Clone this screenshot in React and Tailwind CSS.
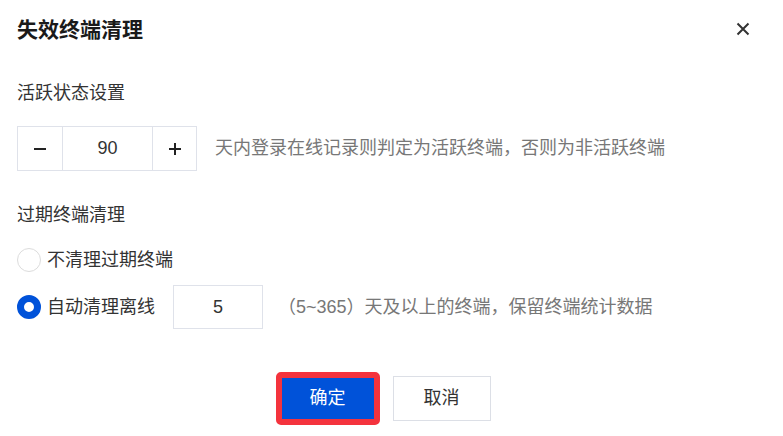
import { useState } from 'react';

const font = { fontFamily: '"Liberation Sans", "Noto Sans CJK SC", sans-serif' };

export default function App() {
  const [days, setDays] = useState(90);
  const [mode, setMode] = useState('auto');

  return (
    <div className="w-[783px] h-[436px] bg-white text-[#333] overflow-hidden" style={font}>
      <div className="h-[58px] flex items-center justify-between pl-[17px] pr-[33px]">
        <h1 className="text-[21px] font-bold text-[#1a1a1a] leading-none">失效终端清理</h1>
        <button className="w-[14px] h-[14px] flex items-center justify-center text-[#333]">
          <svg width="14" height="14" viewBox="0 0 14 14" fill="none" stroke="currentColor" strokeWidth="2">
            <path d="M1.5 1.5 L12.5 12.5 M12.5 1.5 L1.5 12.5" />
          </svg>
        </button>
      </div>

      <div className="px-[17px]">
        <p className="mt-[22px] h-[26px] leading-[26px] text-[18px] text-[#333]">活跃状态设置</p>

        <div className="mt-[20px] flex items-center">
          <div className="flex h-[45px] border border-[#dfe2ea]">
            <button
              onClick={() => setDays(d => Math.max(0, d - 1))}
              className="w-[45px] flex items-center justify-center border-r border-[#dfe2ea]"
            >
              <svg width="14" height="14" viewBox="0 0 14 14" stroke="#222" strokeWidth="2"><path d="M1 7 H13" /></svg>
            </button>
            <div className="w-[89px] flex items-center justify-center text-[18px] text-[#333]">{days}</div>
            <button
              onClick={() => setDays(d => d + 1)}
              className="w-[44px] flex items-center justify-center border-l border-[#dfe2ea]"
            >
              <svg width="14" height="14" viewBox="0 0 14 14" stroke="#222" strokeWidth="2"><path d="M1 7 H13 M7 1 V13" /></svg>
            </button>
          </div>
          <span className="ml-[18px] text-[18px] text-[#777]">天内登录在线记录则判定为活跃终端，否则为非活跃终端</span>
        </div>

        <p className="mt-[31px] h-[26px] leading-[26px] text-[18px] text-[#333]">过期终端清理</p>

        <label className="mt-[19px] h-[26px] flex items-center cursor-pointer" onClick={() => setMode('none')}>
          <span className={mode === 'none'
            ? 'w-[24px] h-[24px] rounded-full border-[7px] border-[#0052d9] bg-white'
            : 'w-[24px] h-[24px] rounded-full border border-[#dcdcdc] bg-white'} />
          <span className="ml-[6px] text-[18px] text-[#333]">不清理过期终端</span>
        </label>

        <div className="mt-[12px] h-[44px] flex items-center">
          <label className="flex items-center cursor-pointer" onClick={() => setMode('auto')}>
            <span className={mode === 'auto'
              ? 'w-[24px] h-[24px] rounded-full border-[7px] border-[#0052d9] bg-white'
              : 'w-[24px] h-[24px] rounded-full border border-[#dcdcdc] bg-white'} />
            <span className="ml-[6px] text-[18px] text-[#333]">自动清理离线</span>
          </label>
          <div className="ml-[18px] w-[90px] h-[44px] border border-[#dfe2ea] flex items-center justify-center text-[18px] text-[#333]">5</div>
          <span className="ml-[15px] text-[18px] text-[#777]">（5~365）天及以上的终端，保留终端统计数据</span>
        </div>
      </div>

      <div className="mt-[43px] flex items-center justify-center gap-[13px] pr-[17px]">
        <div className="rounded-[5px] border-[6px] border-[#f4333d]">
          <button className="w-[92px] h-[41px] bg-[#0052d9] text-white text-[18px] flex items-center justify-center">确定</button>
        </div>
        <button className="w-[98px] h-[45px] border border-[#dcdfe6] bg-white text-[18px] text-[#333] flex items-center justify-center">取消</button>
      </div>
    </div>
  );
}
